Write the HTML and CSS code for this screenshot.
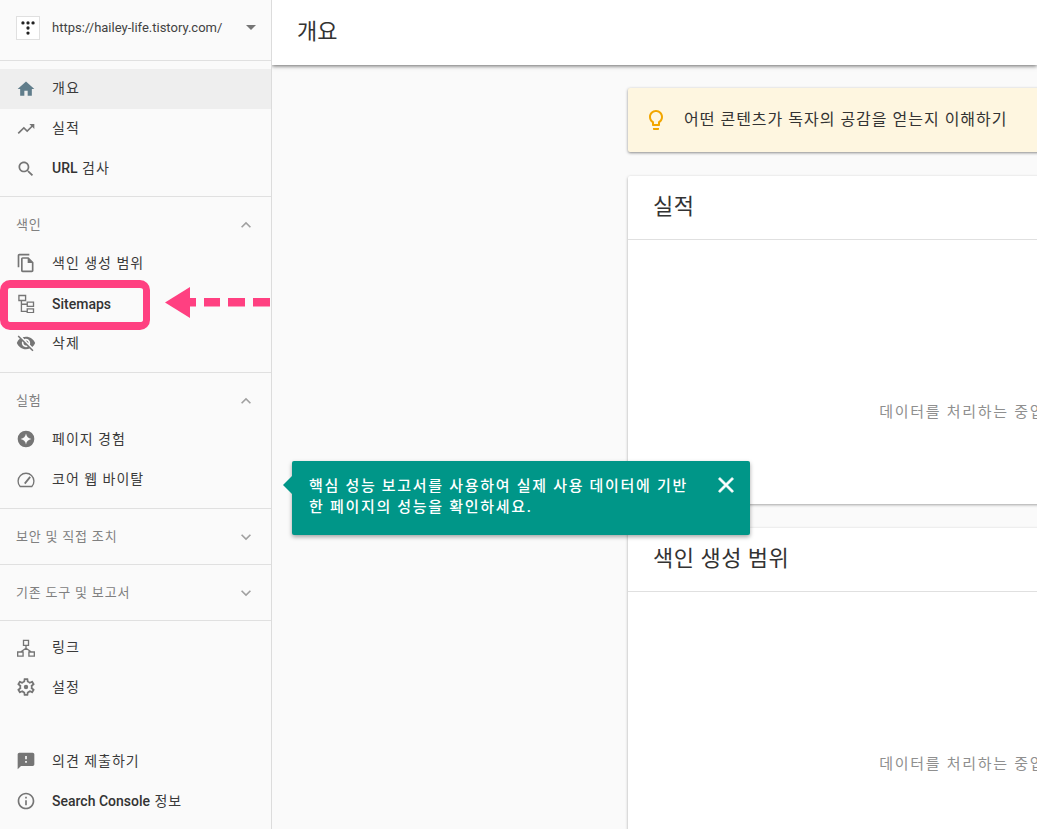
FILE: index.html
```html
<!DOCTYPE html>
<html lang="ko">
<head>
<meta charset="utf-8">
<title>Search Console</title>
<link rel="stylesheet" href="styles.css">
</head>
<body>
<div class="app">
  <aside class="sidebar">
    <div class="property">
      <span class="logo"><svg viewBox="0 0 24 24" width="22" height="22"><g fill="#222"><circle cx="6.500" cy="6.500" r="1.800"/><circle cx="12" cy="6.500" r="1.800"/><circle cx="17.500" cy="6.500" r="1.800"/><circle cx="12" cy="12" r="1.800"/><circle cx="12" cy="17.500" r="1.800"/></g></svg></span>
      <span class="property-url">https://hailey-life.tistory.com/</span>
      <span class="caret"></span>
    </div>
    <nav class="group">
      <a class="item active"><svg class="icon" viewBox="0 0 24 24"><path fill="#607d8b" d="M10 20v-6h4v6h5v-8h3L12 3 2 12h3v8z"/></svg><span>개요</span></a>
      <a class="item"><svg class="icon" viewBox="0 0 24 24"><path d="M16 6l2.290 2.290-4.880 4.880-4-4L2 16.590 3.410 18l6-6 4 4 6.300-6.290L22 12V6z"/></svg><span>실적</span></a>
      <a class="item"><svg class="icon" viewBox="0 0 24 24"><path d="M15.500 14h-.79l-.28-.27C15.410 12.590 16 11.110 16 9.500 16 5.910 13.090 3 9.500 3S3 5.910 3 9.500 5.910 16 9.500 16c1.610 0 3.090-.59 4.230-1.570l.27.28v.79l5 4.990L20.490 19l-4.990-5zm-6 0C7.010 14 5 11.990 5 9.500S7.010 5 9.500 5 14 7.010 14 9.500 11.990 14 9.500 14z"/></svg><span><b class="latin">URL</b> 검사</span></a>
    </nav>
    <section class="section">
      <div class="section-head open"><span>색인</span><svg class="chev" viewBox="0 0 24 24"><path d="M12 8l-6 6 1.410 1.410L12 10.830l4.590 4.580L18 14z"/></svg></div>
      <a class="item"><svg class="icon" viewBox="0 0 24 24"><path d="M16 1H4c-1.100 0-2 .9-2 2v14h2V3h12V1zm-1 4H8c-1.100 0-1.990.9-1.990 2L6 21c0 1.100.89 2 1.990 2H19c1.100 0 2-.9 2-2V11l-6-6zM8 21V7h6v5h5v9H8z"/></svg><span>색인 생성 범위</span></a>
      <a class="item"><svg class="icon line" viewBox="0 0 24 24"><path d="M3.500 3h8v6h-8zM13.500 11H21v5h-7.500zM13.500 19H21v4.500h-7.500zM6.500 9v13h7M6.500 13.500h7"/></svg><span class="latin">Sitemaps</span></a>
      <a class="item"><svg class="icon" viewBox="0 0 24 24"><path d="M12 7c2.760 0 5 2.240 5 5 0 .65-.13 1.260-.36 1.830l2.920 2.920c1.510-1.260 2.700-2.890 3.430-4.750-1.730-4.390-6-7.500-11-7.500-1.400 0-2.740.25-3.980.7l2.160 2.160C10.740 7.130 11.350 7 12 7zM2 4.270l2.280 2.280.46.46C3.080 8.300 1.780 10.020 1 12c1.730 4.390 6 7.500 11 7.500 1.550 0 3.030-.3 4.380-.84l.42.42L19.730 22 21 20.730 3.270 3 2 4.270zM7.530 9.800l1.550 1.550c-.05.21-.08.43-.08.65 0 1.660 1.340 3 3 3 .22 0 .44-.03.65-.08l1.550 1.550c-.67.33-1.410.53-2.200.53-2.760 0-5-2.240-5-5 0-.79.2-1.530.53-2.200zm4.310-.78l3.150 3.150.02-.16c0-1.660-1.340-3-3-3l-.17.01z"/></svg><span>삭제</span></a>
    </section>
    <section class="section">
      <div class="section-head open"><span>실험</span><svg class="chev" viewBox="0 0 24 24"><path d="M12 8l-6 6 1.410 1.410L12 10.830l4.590 4.580L18 14z"/></svg></div>
      <a class="item"><svg class="icon" viewBox="0 0 24 24"><path fill-rule="evenodd" d="M12 2a10 10 0 1 0 0 20 10 10 0 0 0 0-20zm0 3.500c.6 3.600 2.900 5.900 6.500 6.500-3.600.6-5.900 2.900-6.500 6.500-.6-3.600-2.900-5.900-6.500-6.500 3.600-.6 5.900-2.900 6.500-6.500z"/></svg><span>페이지 경험</span></a>
      <a class="item"><svg class="icon line" viewBox="0 0 24 24"><path d="M5 21h14a9.500 9.500 0 1 0-14 0z"/><path class="needle" d="M10.500 17.500L17 9.500"/></svg><span>코어 웹 바이탈</span></a>
    </section>
    <section class="section closed">
      <div class="section-head"><span>보안 및 직접 조치</span><svg class="chev" viewBox="0 0 24 24"><path d="M16.590 8.590L12 13.170 7.410 8.590 6 10l6 6 6-6z"/></svg></div>
    </section>
    <section class="section closed">
      <div class="section-head"><span>기존 도구 및 보고서</span><svg class="chev" viewBox="0 0 24 24"><path d="M16.590 8.590L12 13.170 7.410 8.590 6 10l6 6 6-6z"/></svg></div>
    </section>
    <section class="section tools">
      <a class="item"><svg class="icon line" viewBox="0 0 24 24"><path d="M9 4h6v6H9zM2 18h6.500v5H2zM15.500 18H22v5h-6.500zM12 10v4M12 13.500L5.500 18M12 13.500L18.500 18"/></svg><span>링크</span></a>
      <a class="item"><svg class="icon gear" viewBox="0 0 24 24"><path d="M19.430 12.980c.04-.32.07-.64.07-.98 0-.34-.03-.66-.07-.98l2.110-1.650c.19-.15.24-.42.12-.64l-2-3.460c-.09-.16-.26-.25-.44-.25-.06 0-.12.01-.17.03l-2.490 1c-.52-.4-1.080-.73-1.690-.98l-.38-2.650C14.460 2.180 14.250 2 14 2h-4c-.25 0-.46.18-.49.42l-.38 2.650c-.61.25-1.170.59-1.690.98l-2.490-1c-.06-.02-.12-.03-.18-.03-.17 0-.34.09-.43.25l-2 3.460c-.13.22-.07.49.12.64l2.110 1.650c-.04.32-.07.65-.07.98 0 .33.03.66.07.98l-2.110 1.650c-.19.15-.24.42-.12.64l2 3.460c.09.16.26.25.44.25.06 0 .12-.01.17-.03l2.490-1c.52.4 1.080.73 1.690.98l.38 2.650c.03.24.24.42.49.42h4c.25 0 .46-.18.49-.42l.38-2.650c.61-.25 1.170-.59 1.690-.98l2.490 1c.06.02.12.03.18.03.17 0 .34-.09.43-.25l2-3.460c.12-.22.07-.49-.12-.64l-2.110-1.650zm-1.980-1.710c.04.31.05.52.05.73 0 .21-.02.43-.05.73l-.14 1.130.89.7 1.080.84-.7 1.210-1.270-.51-1.040-.42-.9.68c-.43.32-.84.56-1.250.73l-1.060.43-.16 1.130-.2 1.350h-1.400l-.19-1.350-.16-1.130-1.060-.43c-.43-.18-.83-.41-1.230-.71l-.91-.7-1.060.43-1.270.51-.7-1.210 1.080-.84.89-.7-.14-1.130c-.03-.31-.05-.54-.05-.74s.02-.43.05-.73l.14-1.130-.89-.7-1.080-.84.7-1.210 1.270.51 1.040.42.9-.68c.43-.32.84-.56 1.250-.73l1.060-.43.16-1.130.2-1.350h1.390l.19 1.350.16 1.130 1.060.43c.43.18.83.41 1.230.71l.91.7 1.060-.43 1.270-.51.7 1.210-1.070.85-.89.7.14 1.130z"/><circle cx="12" cy="12" r="2.500"/></svg><span>설정</span></a>
      <a class="item footer-first"><svg class="icon" viewBox="0 0 24 24"><path d="M20 2H4c-1.100 0-1.990.9-1.990 2L2 22l4-4h14c1.100 0 2-.9 2-2V4c0-1.100-.9-2-2-2zm-7 12h-2v-2h2v2zm0-4h-2V6h2v4z"/></svg><span>의견 제출하기</span></a>
      <a class="item"><svg class="icon" viewBox="0 0 24 24"><path d="M11 7h2v2h-2zm0 4h2v6h-2zm1-9C6.480 2 2 6.480 2 12s4.480 10 10 10 10-4.480 10-10S17.520 2 12 2zm0 18c-4.410 0-8-3.590-8-8s3.590-8 8-8 8 3.590 8 8-3.590 8-8 8z"/></svg><span><b class="latin">Search Console</b> 정보</span></a>
    </section>
  </aside>
  <main class="main">
    <header class="topbar"><h1>개요</h1></header>
    <div class="content">
      <div class="banner">
        <svg class="bulb" viewBox="0 0 24 24"><path d="M9 21c0 .55.45 1 1 1h4c.55 0 1-.45 1-1v-1H9v1zm3-19C8.140 2 5 5.140 5 9c0 2.380 1.190 4.470 3 5.740V17c0 .55.45 1 1 1h6c.55 0 1-.45 1-1v-2.260c1.810-1.270 3-3.360 3-5.740 0-3.860-3.140-7-7-7zm2.850 11.100l-.85.6V16h-4v-2.300l-.85-.6C7.800 12.160 7 10.630 7 9c0-2.760 2.240-5 5-5s5 2.240 5 5c0 1.630-.8 3.160-2.150 4.100z"/></svg>
        <span>어떤 콘텐츠가 독자의 공감을 얻는지 이해하기</span>
      </div>
      <article class="card">
        <h2 class="card-title">실적</h2>
        <div class="card-body">데이터를 처리하는 중입니다. 며칠 후에 다시 확인해 주세요.</div>
      </article>
      <article class="card">
        <h2 class="card-title">색인 생성 범위</h2>
        <div class="card-body">데이터를 처리하는 중입니다. 며칠 후에 다시 확인해 주세요.</div>
      </article>
    </div>
  </main>
  <div class="highlight"></div>
  <div class="arrow">
    <svg viewBox="0 0 106 31" width="106" height="31"><path fill="#ff4081" d="M0 15.500L25 0v31z"/><path fill="#ff4081" d="M25 11h6v8.500h-6zM39 11h16v8.500H39zM63 11h17v8.500H63zM88 11h17v8.500H88z"/></svg>
  </div>
  <div class="tip">
    <p>핵심 성능 보고서를 사용하여 실제 사용 데이터에 기반한 페이지의 성능을 확인하세요.</p>
    <svg class="tip-close" viewBox="0 0 24 24"><path d="M19 6.410L17.590 5 12 10.590 6.410 5 5 6.410 10.590 12 5 17.590 6.410 19 12 13.410 17.590 19 19 17.590 13.410 12z"/></svg>
  </div>
</div>
</body>
</html>
```

FILE: styles.css
```css
* { box-sizing: border-box; }
html, body { margin: 0; height: 100%; overflow: hidden; }
body { font-family: Roboto, "Noto Sans CJK KR", sans-serif; color: #212121; background: #fafafa; }
.app { position: relative; display: flex; width: 1037px; height: 829px; overflow: hidden; }

.sidebar { flex: 0 0 272px; height: 829px; background: #fafafa; border-right: 1px solid #dcdcdc; display: flex; flex-direction: column; }
.sidebar > * { flex: none; }
.property { height: 61px; border-bottom: 1px solid #e0e0e0; display: flex; align-items: center; padding: 0 15px 5px 16px; }
.logo { width: 24px; height: 24px; margin-right: 12px; background: #fff; border: 1px solid #e0e0e0; display: flex; align-items: center; justify-content: center; }
.property-url { flex: 1; font-size: 13px; color: #424242; white-space: nowrap; }
.caret { width: 0; height: 0; border-left: 5px solid transparent; border-right: 5px solid transparent; border-top: 5px solid #757575; }

.group { padding: 8px 0 7px; }
.group .item span { margin-bottom: 2px; }
.item { display: flex; align-items: center; height: 40px; padding-left: 16px; font-size: 14px; line-height: 20px; font-weight: 400; letter-spacing: 1px; color: #3a3a3a; }
.item.active { background: #eeeeee; }
.latin { font-weight: 500; letter-spacing: 0; color: #333; }
.item > .latin { margin-top: 2px; }
.icon { width: 20px; height: 20px; margin-right: 16px; fill: #757575; flex: none; }
.icon.line { fill: none; stroke: #757575; stroke-width: 1.600; }
.icon .needle { stroke-width: 2.200; }
.icon.gear { overflow: visible; transform: scale(1.060); }

.section { border-top: 1px solid #e0e0e0; padding-bottom: 9px; }
.section.closed { padding-bottom: 0; }
.section-head { display: flex; align-items: center; justify-content: space-between; height: 55px; padding: 0 15px 0 16px; font-size: 13px; letter-spacing: .8px; color: #808080; }
.section-head span { margin-bottom: 2px; }
.section-head.open { margin-bottom: -9px; }
.chev { width: 20px; height: 20px; fill: #a0a0a0; }
.tools { padding-top: 6px; padding-bottom: 0; }
.footer-first { margin-top: 34px; }

.main { flex: 1; min-width: 0; overflow: hidden; }
.topbar { height: 65px; background: #fff; box-shadow: 0 1px 4px rgba(0,0,0,.6); position: relative; padding: 0 25px; display: flex; align-items: center; }
.topbar h1 { margin: 0 0 8px; font-size: 22px; font-weight: 400; color: #333; }
.content { width: 924px; margin-left: 356px; padding-top: 23px; }
.banner { height: 64px; background: #fef6e0; border-radius: 2px; box-shadow: 0 1px 3px rgba(0,0,0,.45); display: flex; align-items: center; padding: 0 0 4px 16px; font-size: 16px; letter-spacing: 1px; color: #333; margin-bottom: 24px; }
.bulb { width: 24px; height: 24px; fill: #f2a600; margin-right: 16px; margin-top: 4px; }
.card { background: #fff; border-radius: 2px; box-shadow: 0 1px 3px rgba(0,0,0,.35); margin-bottom: 24px; }
.card-title { margin: 0; height: 64px; border-bottom: 1px solid #e0e0e0; padding: 0 25px 8px; font-size: 22px; letter-spacing: .5px; font-weight: 400; color: #333; display: flex; align-items: center; }
.card-body { height: 264px; display: flex; align-items: center; justify-content: center; font-size: 15px; letter-spacing: 1.700px; color: #8f8f8f; white-space: nowrap; padding-top: 76px; }

.highlight { position: absolute; left: 0; top: 280px; width: 150px; height: 50px; border: 8px solid #ff4081; border-right-width: 7px; border-radius: 10px; }
.arrow { position: absolute; left: 165px; top: 287px; height: 31px; }
.arrow svg { display: block; }
.tip { position: absolute; left: 292px; top: 461px; width: 458px; height: 74px; background: #009688; border-radius: 2px; box-shadow: 0 2px 4px rgba(0,0,0,.35); color: #fff; padding: 15px 16px 0 17px; }
.tip::before { content: ""; position: absolute; left: -9px; top: 15px; width: 0; height: 0; border-top: 9px solid transparent; border-bottom: 9px solid transparent; border-right: 9px solid #009688; }
.tip p { margin: 0; width: 386px; font-size: 15px; line-height: 21px; font-weight: 500; letter-spacing: 1.700px; }
.tip-close { position: absolute; right: 11px; top: 11px; width: 26px; height: 26px; fill: #fff; stroke: #fff; stroke-width: .6; }
```
